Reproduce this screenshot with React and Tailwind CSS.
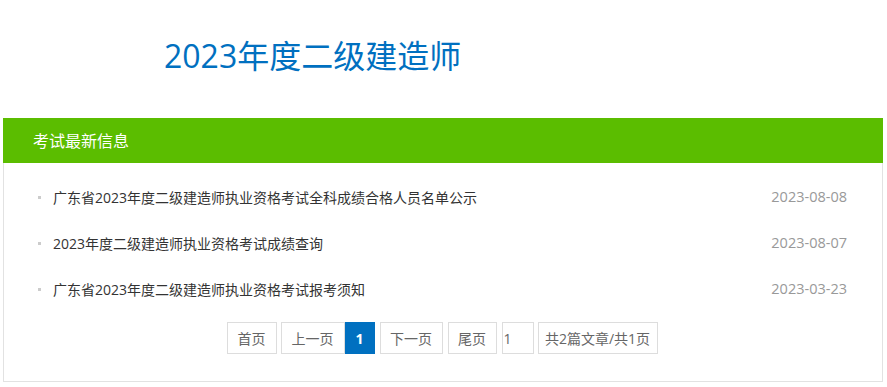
import React from 'react';

const news = [
  { title: '广东省2023年度二级建造师执业资格考试全科成绩合格人员名单公示', date: '2023-08-08' },
  { title: '2023年度二级建造师执业资格考试成绩查询', date: '2023-08-07' },
  { title: '广东省2023年度二级建造师执业资格考试报考须知', date: '2023-03-23' },
];

const font = { fontFamily: '"Open Sans", "Noto Sans CJK SC", sans-serif' };

const PageBtn = ({ children, className = '' }) => (
  <span
    className={`flex h-[32px] items-center justify-center border border-[#dddddd] text-[14px] text-[#666666] ${className}`}
  >
    {children}
  </span>
);

export default function App() {
  return (
    <div className="w-[887px] bg-white" style={font}>
      <div className="h-[118px] pl-[164px] pt-[36px]">
        <h1 className="text-[32px] leading-[40px] text-[#0070c0]">2023年度二级建造师</h1>
      </div>

      <div className="ml-[3px] w-[880px]">
        <div className="flex h-[45px] items-center bg-[#5bbd00] pl-[30px] text-[16px] text-white">
          考试最新信息
        </div>
        <div className="border border-t-0 border-[#e2e2e2] pb-[27px] pt-[11px]">
          <ul>
            {news.map((n) => (
              <li key={n.date} className="flex h-[46px] items-center pl-[34px] pr-[35px] text-[14px]">
                <span className="mr-[12px] h-[3px] w-[3px] bg-[#cccccc]" />
                <span className="flex-1 text-[#333333]">{n.title}</span>
                <span className="text-[14.5px] text-[#999999]">{n.date}</span>
              </li>
            ))}
          </ul>
          <div className="mt-[10px] flex justify-center pr-[2px]">
            <PageBtn className="w-[50px]">首页</PageBtn>
            <PageBtn className="ml-[4px] w-[64px]">上一页</PageBtn>
            <span className="flex h-[32px] w-[30px] items-center justify-center bg-[#0070c0] text-[14px] font-bold text-white">
              1
            </span>
            <PageBtn className="ml-[5px] w-[63px]">下一页</PageBtn>
            <PageBtn className="ml-[5px] w-[49px]">尾页</PageBtn>
            <span className="ml-[5px] flex h-[32px] w-[32px] items-center border border-[#dddddd] pl-[1px] text-[14px] text-[#666666]">
              1
            </span>
            <PageBtn className="ml-[4px] w-[120px]">共2篇文章/共1页</PageBtn>
          </div>
        </div>
      </div>
    </div>
  );
}
